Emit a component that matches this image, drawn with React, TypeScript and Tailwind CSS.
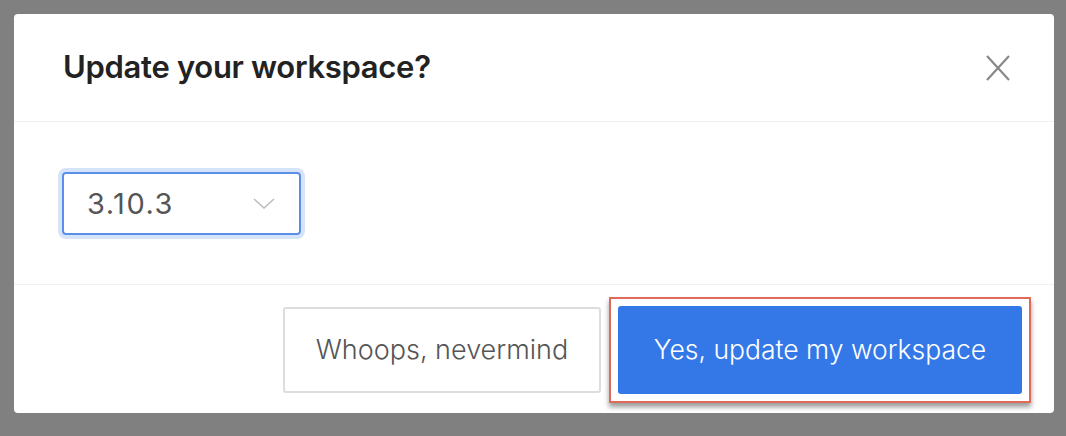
import React from "react";

export default function App() {
  return (
    <div className="w-[1066px] h-[436px] bg-[#808080] pt-[14px] pl-[14px] font-['Inter',sans-serif]">
      <div className="w-[1040px] h-[399px] bg-white rounded-[4px] flex flex-col">
        {/* Header */}
        <div className="h-[108px] border-b border-[#f0f0f0] flex items-center justify-between pl-[49px] pr-[44px]">
          <h2 className="text-[31px] font-semibold text-[#222] tracking-[-0.3px]">Update your workspace?</h2>
          <button className="w-[24px] h-[26px] flex items-center justify-center text-[#888]">
            <svg width="24" height="26" viewBox="0 0 24 26" fill="none" stroke="currentColor" strokeWidth="2.2">
              <path d="M1 1 L23 25 M23 1 L1 25" />
            </svg>
          </button>
        </div>

        {/* Body */}
        <div className="h-[163px] border-b border-[#f0f0f0] pl-[48px] pt-[50px]">
          <div className="w-[239px] h-[63px] rounded-[4px] border-2 border-[#5b8ee6] ring-4 ring-[#d6e4fa] flex items-center justify-between pl-[23px] pr-[24px]">
            <span className="text-[29px] text-[#555] tracking-[1.5px]">3.10.3</span>
            <svg width="22" height="11" viewBox="0 0 22 11" fill="none" stroke="#bbb" strokeWidth="1.5">
              <path d="M1 1 L11 10 L21 1" />
            </svg>
          </div>
        </div>

        {/* Footer */}
        <div className="flex-1 flex items-start justify-end pr-[32px] pt-[21px] gap-[17px]">
          <button className="w-[318px] h-[86px] mt-[1px] rounded-[3px] border-2 border-[#ddd] bg-white text-[27px] font-light text-[#555]">
            Whoops, nevermind
          </button>
          <div className="p-[7px] -m-[9px] border-2 border-[#e0695a] shadow-[0_4px_5px_rgba(0,0,0,0.4)]">
            <button className="w-[404px] h-[88px] rounded-[3px] bg-[#3478e8] text-[26.5px] font-light text-white">
              Yes, update my workspace
            </button>
          </div>
        </div>
      </div>
    </div>
  );
}
